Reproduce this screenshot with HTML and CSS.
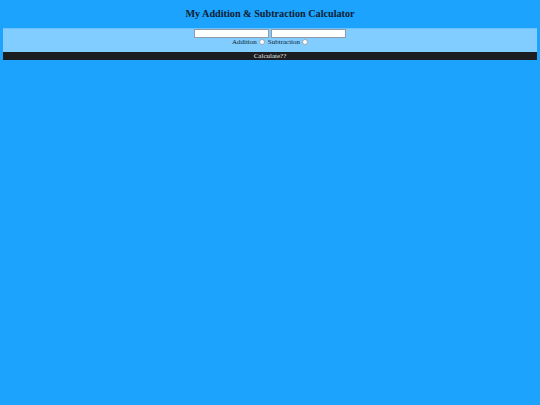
FILE: index.html
```html
<!DOCTYPE html>
<html>
<head>
<meta charset="utf-8">
<link rel="stylesheet" href="styles.css">
</head>
<body>
<h1 class="title">My Addition &amp; Subtraction Calculator</h1>
<div class="panel">
  <div class="inputs">
    <input class="num" type="text">
    <input class="num" type="text">
  </div>
  <div class="ops">
    <label class="op">Addition <input class="radio" type="radio" name="op"></label>
    <label class="op">Subtraction <input class="radio" type="radio" name="op"></label>
  </div>
</div>
<button class="calc">Calculate??</button>
</body>
</html>
```
FILE: styles.css
```css
html, body {
  margin: 0;
  padding: 0;
}
body {
  background: #1ca3fd;
  font-family: "Liberation Serif", "Times New Roman", serif;
  color: #0b1c33;
  padding: 0 3px;
  height: 405px;
}
.title {
  margin: 0;
  padding-top: 7px;
  height: 21px;
  font-size: 10.2px;
  font-weight: bold;
  text-align: center;
  line-height: 14px;
}
.panel {
  background: #82cdff;
  height: 24px;
  display: flex;
  flex-direction: column;
  align-items: center;
  box-sizing: border-box;
  border-top: 1px solid #6fc2fb;
}
.inputs {
  display: flex;
  gap: 2px;
}
.num {
  width: 75px;
  height: 9px;
  box-sizing: border-box;
  border: 1px solid #8e9aa8;
  background: #fff;
  padding: 0;
  margin: 0;
  font-size: 7px;
}
.ops {
  display: flex;
  gap: 3px;
  margin-top: 0;
  font-size: 7px;
  line-height: 8px;
}
.op {
  display: flex;
  align-items: center;
  gap: 2px;
}
.radio {
  -webkit-appearance: none;
  appearance: none;
  width: 6px;
  height: 6px;
  border-radius: 50%;
  background: #fff;
  border: 1px solid #9aa6b2;
  box-sizing: border-box;
  margin: 0;
}
.calc {
  display: block;
  width: 100%;
  height: 8px;
  margin: 0;
  padding: 0;
  border: none;
  background: #1b1d20;
  color: #e6e6e6;
  font-family: "Liberation Serif", "Times New Roman", serif;
  font-size: 7px;
  line-height: 8px;
}
```
